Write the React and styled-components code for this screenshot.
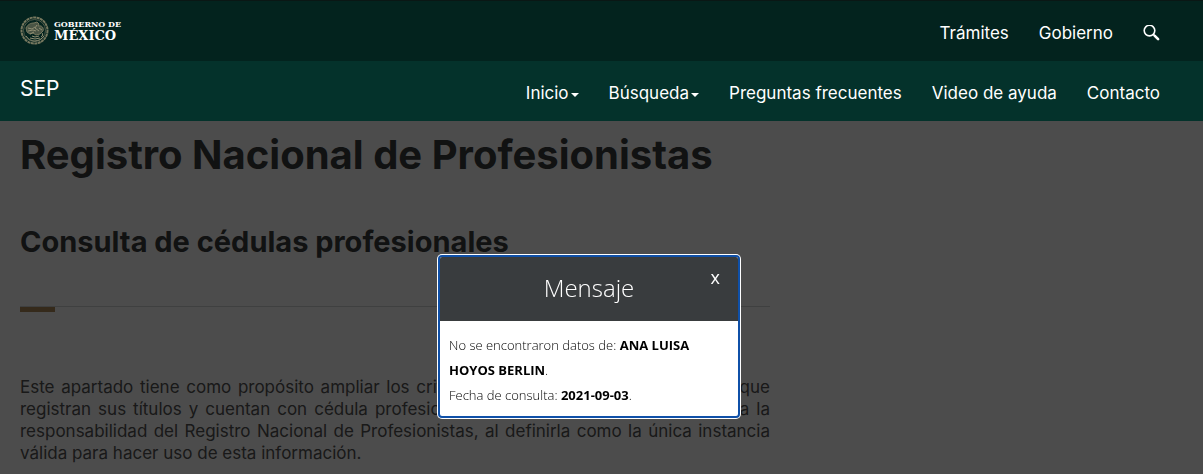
import React, { useState } from 'react';
import styled, { createGlobalStyle } from 'styled-components';

const GlobalStyle = createGlobalStyle`
  * {
    box-sizing: border-box;
  }

  body {
    margin: 0;
    background-color: #fff;
    font-family: Inter, "Open Sans", sans-serif;
    font-size: 17px;
  }
`;

const Header = styled.header`
  position: relative;
  z-index: 20;
  color: #fff;
`;

const Bar = styled.div`
  display: flex;
  justify-content: space-between;
  height: ${(props) => (props.$main ? '61px' : '60px')};
  padding: 0 43px 0 20px;
  background-color: ${(props) => (props.$main ? '#03231e' : '#04322b')};
  border-top: ${(props) => (props.$main ? '1px solid #0a1715' : 'none')};
`;

const Logo = styled.a`
  display: flex;
  align-items: center;
  gap: 4px;
  color: #fff;
  text-decoration: none;
`;

const LogoText = styled.span`
  display: flex;
  flex-direction: column;
  font-family: "DejaVu Serif", serif;
  font-weight: bold;
`;

const LogoTop = styled.span`
  font-size: 8px;
  line-height: 10px;
`;

const LogoBottom = styled.span`
  font-size: 13px;
  line-height: 14px;
`;

const Brand = styled.a`
  padding-top: 16px;
  font-size: 21px;
  line-height: 24px;
  color: #fff;
  text-decoration: none;
`;

const Nav = styled.nav`
  display: flex;
  align-items: center;
  gap: 30px;
  padding-top: 4px;
`;

const NavLink = styled.a`
  font-size: 17px;
  line-height: 24px;
  color: #fff;
  text-decoration: none;
  white-space: nowrap;
`;

const NavButton = styled.button`
  display: flex;
  align-items: center;
  gap: 2px;
  padding: 0;
  border: none;
  background: none;
  font-family: inherit;
  font-size: 17px;
  line-height: 24px;
  color: #fff;
  cursor: pointer;
`;

const Caret = styled.span`
  border-top: 4px solid #fff;
  border-left: 4px solid transparent;
  border-right: 4px solid transparent;
  margin-top: 4px;
`;

const Main = styled.main`
  display: grid;
  grid-template-columns: repeat(12, 1fr);
  column-gap: 30px;
  padding: 10px 43px 0 20px;
`;

const Content = styled.div`
  grid-column: span 8;
`;

const Title = styled.h1`
  margin: 0 0 45px;
  font-size: 40px;
  line-height: 48px;
  font-weight: 700;
  color: #393c3e;
  white-space: nowrap;
`;

const Subtitle = styled.h2`
  margin: 0;
  font-size: 29px;
  line-height: 36px;
  font-weight: 700;
  color: #393c3e;
`;

const Divider = styled.div`
  margin: 46px 0 64px;
  border-top: 1px solid #d4d6d8;

  &::before {
    content: "";
    display: block;
    width: 35px;
    height: 5px;
    background-color: #b38e5d;
  }
`;

const Text = styled.p`
  margin: 0;
  font-size: 17px;
  line-height: 22px;
  text-align: justify;
  color: #545454;
`;

const Backdrop = styled.div`
  position: fixed;
  inset: 0;
  z-index: 10;
  display: flex;
  justify-content: center;
  align-items: flex-start;
  padding: 255px 25px 0 0;
  background-color: rgba(0, 0, 0, 0.7);
`;

const Dialog = styled.section`
  width: 302px;
  border: 2px solid #0f50a8;
  border-radius: 4px;
  box-shadow: 0 0 0 1px #fff;
  background-color: #fff;
  font-family: "Open Sans", sans-serif;
  font-weight: 300;
  overflow: hidden;
`;

const DialogHeader = styled.div`
  display: grid;
  grid-template-columns: 1fr auto 1fr;
  padding: 13px 18px 15px;
  background-color: #393c3e;
  color: #fff;
`;

const DialogTitle = styled.h3`
  grid-column: 2;
  margin: 0;
  font-size: 24px;
  line-height: 36px;
  font-weight: 300;
`;

const CloseButton = styled.button`
  justify-self: end;
  align-self: start;
  padding: 0;
  border: none;
  background: none;
  font-family: inherit;
  font-size: 18px;
  line-height: 14px;
  color: #fff;
  cursor: pointer;
`;

const DialogBody = styled.p`
  margin: 0;
  padding: 12px 9px 8px;
  font-size: 13px;
  line-height: 25px;
  color: #000;

  b {
    font-weight: 700;
  }
`;

function Seal() {
  return (
    <svg width="30" height="30" viewBox="0 0 30 30" fill="none" stroke="#77785f" aria-hidden="true">
      <circle cx="14.5" cy="14.5" r="13" strokeWidth="2" strokeDasharray="3 0.5" />
      <circle cx="14.5" cy="14.5" r="11" strokeWidth="1" stroke="#4f5a49" />
      <path d="M6 12c2-4 5-5 8-5l3-1 2 2-1 2c4-1 6 2 5 5l-3 3-4 1-3-2-3 1-3-2z" fill="#4a5545" strokeWidth="1" />
      <path d="M8 12l4 1 3-2M8 15l5-1 3 1M10 18l4-2M17 9l-2 3 4 3M19 12l3 2M6 20c3 4 6 5 9 5s7-2 9-5M12 20l3 1 4-1M10 22l5 1 5-1M22 17c1 1 1 3-1 4" strokeWidth="1" stroke="#8f8e73" />
    </svg>
  );
}

function SearchIcon() {
  return (
    <svg width="17" height="17" viewBox="0 0 17 17" fill="none" stroke="#fff" aria-hidden="true">
      <circle cx="6.5" cy="5.6" r="5.3" strokeWidth="1.6" />
      <path d="M10.3 9.4l2 2" strokeWidth="1.8" />
      <path d="M11.8 10.9l3.3 3.3" strokeWidth="2.6" strokeLinecap="round" />
    </svg>
  );
}

function App() {
  const [open, setOpen] = useState(true);

  return (
    <>
      <GlobalStyle />
      <Header>
        <Bar $main>
          <Logo href="#">
            <Seal />
            <LogoText>
              <LogoTop>GOBIERNO DE</LogoTop>
              <LogoBottom>MÉXICO</LogoBottom>
            </LogoText>
          </Logo>
          <Nav>
            <NavLink href="#">Trámites</NavLink>
            <NavLink href="#">Gobierno</NavLink>
            <NavButton type="button" aria-label="Buscar">
              <SearchIcon />
            </NavButton>
          </Nav>
        </Bar>
        <Bar>
          <Brand href="#">SEP</Brand>
          <Nav>
            <NavButton type="button">Inicio<Caret /></NavButton>
            <NavButton type="button">Búsqueda<Caret /></NavButton>
            <NavLink href="#">Preguntas frecuentes</NavLink>
            <NavLink href="#">Video de ayuda</NavLink>
            <NavLink href="#">Contacto</NavLink>
          </Nav>
        </Bar>
      </Header>
      <Main>
        <Content>
          <Title>Registro Nacional de Profesionistas</Title>
          <Subtitle>Consulta de cédulas profesionales</Subtitle>
          <Divider />
          <Text>
            Este apartado tiene como propósito ampliar los criterios de búsqueda de las personas que
            registran sus títulos y cuentan con cédula profesional, lo que corresponde legalmente a la
            responsabilidad del Registro Nacional de Profesionistas, al definirla como la única
            instancia válida para hacer uso de esta información.
          </Text>
        </Content>
      </Main>
      {open && (
        <Backdrop>
          <Dialog role="dialog" aria-labelledby="dialog-title">
            <DialogHeader>
              <DialogTitle id="dialog-title">Mensaje</DialogTitle>
              <CloseButton type="button" onClick={() => setOpen(false)}>x</CloseButton>
            </DialogHeader>
            <DialogBody>
              No se encontraron datos de: <b>ANA LUISA HOYOS BERLIN</b>.
              <br />
              Fecha de consulta: <b>2021-09-03</b>.
            </DialogBody>
          </Dialog>
        </Backdrop>
      )}
    </>
  );
}

export default App;
